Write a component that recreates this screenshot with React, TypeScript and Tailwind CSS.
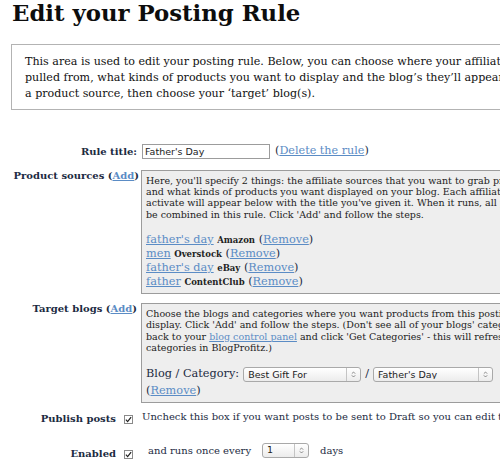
const LABEL = "font-bold text-[10px] text-[#1c2b42]";
const LINK = "text-[#5b8cc5] underline";

function Check() {
  return (
    <span className="inline-flex h-[9px] w-[9px] shrink-0 items-center justify-center border border-[#8a8a8a] bg-white">
      <svg viewBox="0 0 8 8" className="h-[7px] w-[7px]">
        <path d="M1 4.2 L3 6.4 L7 1.2" fill="none" stroke="#222" strokeWidth="1.4" />
      </svg>
    </span>
  );
}

function Chevrons() {
  return (
    <svg viewBox="0 0 6 10" className="h-[9px] w-[5px]">
      <path d="M1 4 L3 2 L5 4 M1 6 L3 8 L5 6" fill="none" stroke="#666" strokeWidth="0.9" />
    </svg>
  );
}

function Select({ value, className }: { value: string; className: string }) {
  return (
    <span
      className={`inline-flex h-[15px] items-center rounded-[3px] border border-[#a9a9a9] bg-gradient-to-b from-white to-[#ececec] font-['DejaVu_Sans',sans-serif] text-[9.5px] leading-none text-[#222] ${className}`}
    >
      <span className="flex-1 truncate pl-[4px]">{value}</span>
      <span className="flex h-full w-[14px] items-center justify-center border-l border-[#c4c4c4]">
        <Chevrons />
      </span>
    </span>
  );
}

export default function App() {
  return (
    <div className="h-[459px] w-[500px] overflow-hidden bg-white font-['DejaVu_Serif',serif] text-[#111]">
      <div className="w-[640px]">
        <h1 className="pl-[12px] text-[22.8px] font-bold leading-[26px] text-[#0d0d0d]">Edit your Posting Rule</h1>

        {/* intro box */}
        <div className="ml-[11px] mt-[18px] w-[600px] border border-[#b3b3b3] pb-[7px] pl-[13px] pt-[9px] text-[11.1px] leading-[16px] whitespace-nowrap">
          This area is used to edit your posting rule. Below, you can choose where your affiliate products will be
          <br />
          pulled from, what kinds of products you want to display and the blog’s they’ll appear on. Simply create
          <br />
          a product source, then choose your ‘target’ blog(s).
        </div>

        {/* rule title */}
        <div className="mt-[33px] flex items-center gap-[4px]">
          <div className={`w-[137px] text-right leading-[15px] ${LABEL}`}>Rule title:</div>
          <input
            defaultValue="Father's Day"
            className="ml-[1px] h-[15px] w-[128px] border border-[#9c9c9c] px-[2px] font-['DejaVu_Sans',sans-serif] text-[9.5px] text-[#222] outline-none"
          />
          <span className="ml-[1px] text-[11.2px] text-[#1c2b42]">
            (<span className={LINK}>Delete the rule</span>)
          </span>
        </div>

        {/* product sources */}
        <div className="mt-[10px] flex items-start gap-[4px]">
          <div className={`w-[139px] text-right leading-[12px] ${LABEL}`}>
            Product sources (<span className={LINK}>Add</span>)
          </div>
          <div className="-ml-[2px] w-[480px] border border-[#9c9c9c] bg-[#eeeeee] px-[4px] pb-[4px] pt-[4px] whitespace-nowrap">
            <div className="text-[9.5px] leading-[11.3px] text-[#222]">
              Here, you'll specify 2 things: the affiliate sources that you want to grab products from
              <br />
              and what kinds of products you want displayed on your blog. Each affiliate source you
              <br />
              activate will appear below with the title you've given it. When it runs, all products will
              <br />
              be combined in this rule. Click 'Add' and follow the steps.
            </div>
            <div className="mt-[13px] text-[11.3px] leading-[14px] text-[#1c2b42]">
              {[
                ["father's day", "Amazon"],
                ["men", "Overstock"],
                ["father's day", "eBay"],
                ["father", "ContentClub"],
              ].map(([t, s], i) => (
                <div key={i}>
                  <span className={LINK}>{t}</span> <span className="text-[8.5px] font-bold text-[#222]">{s}</span> (
                  <span className={LINK}>Remove</span>)
                </div>
              ))}
            </div>
          </div>
        </div>

        {/* target blogs */}
        <div className="mt-[9px] flex items-start gap-[4px]">
          <div className={`w-[137px] text-right leading-[12px] ${LABEL}`}>
            Target blogs (<span className={LINK}>Add</span>)
          </div>
          <div className="w-[480px] border border-[#9c9c9c] bg-[#eeeeee] px-[4px] pb-[3px] pt-[4px] whitespace-nowrap">
            <div className="text-[9.5px] leading-[11.3px] text-[#222]">
              Choose the blogs and categories where you want products from this posting rule to
              <br />
              display. Click 'Add' and follow the steps. (Don't see all of your blogs' categories? Go
              <br />
              back to your <span className={LINK}>blog control panel</span> and click 'Get Categories' - this will refresh your
              <br />
              categories in BlogProfitz.)
            </div>
            <div className="mt-[13px] flex h-[17px] items-center text-[11.3px] text-[#1c2b42]">
              <span className="mr-[4px]">Blog / Category:</span>
              <Select value="Best Gift For" className="w-[118px]" />
              <span className="mx-[4px]">/</span>
              <Select value="Father's Day" className="w-[120px]" />
            </div>
            <div className="text-[11.3px] leading-[16px] text-[#1c2b42]">
              (<span className={LINK}>Remove</span>)
            </div>
          </div>
        </div>

        {/* publish */}
        <div className="mt-[7px] flex items-start gap-[4px]">
          <div className={`flex w-[137px] items-center justify-end gap-[8px] pr-[4px] pt-[2px] leading-[14px] ${LABEL}`}>
            Publish posts <Check />
          </div>
          <div className="ml-[1px] whitespace-nowrap text-[10px] leading-[14px] text-[#1c2b42]">
            Uncheck this box if you want posts to be sent to Draft so you can edit them first.
          </div>
        </div>

        {/* enabled */}
        <div className="mt-[16px] flex items-start gap-[4px]">
          <div className={`flex w-[137px] items-center justify-end gap-[8px] pr-[4px] pt-[5px] leading-[14px] ${LABEL}`}>
            Enabled <Check />
          </div>
          <div className="ml-[7px] flex h-[16px] items-center whitespace-nowrap text-[10px] text-[#1c2b42]">
            and runs once every
            <Select value="1" className="ml-[11px] w-[47px]" />
            <span className="ml-[11px]">days</span>
          </div>
        </div>
      </div>
    </div>
  );
}
